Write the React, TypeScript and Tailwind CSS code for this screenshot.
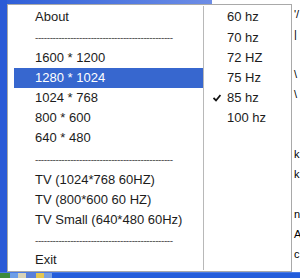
import React from 'react';

const font = { fontFamily: '"Liberation Sans", Arial, sans-serif' };

type Item = { label: string; kind?: 'sep'; active?: boolean; h?: string };

const leftItems: Item[] = [
  { label: 'About' },
  { label: '', kind: 'sep', h: 'h-[21px]' },
  { label: '1600 * 1200' },
  { label: '1280 * 1024', active: true },
  { label: '1024 * 768' },
  { label: '800 * 600' },
  { label: '640 * 480' },
  { label: '', kind: 'sep', h: 'h-[22px]' },
  { label: 'TV (1024*768 60HZ)' },
  { label: 'TV (800*600 60 HZ)' },
  { label: 'TV Small (640*480 60Hz)' },
  { label: '', kind: 'sep' },
  { label: 'Exit' },
];

const rates = [
  { label: '60 hz' },
  { label: '70 hz', h: 'h-[21px]' },
  { label: '72 HZ' },
  { label: '75 Hz' },
  { label: '85 hz', checked: true },
  { label: '100 hz' },
];

// bits of the window behind the menu, one per 20px line
const behind = ["'/", '|', '', '\\', '\\', '', '', 'k', 'k', '', 'n', 'A', 'c'];

function Check() {
  return (
    <svg width="8" height="8" viewBox="0 0 8 8" className="shrink-0">
      <path d="M0.5 4 L3 6.5 L7.5 1" fill="none" stroke="#111" strokeWidth="1.8" />
    </svg>
  );
}

export default function App() {
  return (
    <div className="relative w-[300px] h-[278px] overflow-hidden bg-white" style={font}>
      {/* desktop behind the menu */}
      <div className="flex flex-col w-full h-full">
        <div className="flex flex-1">
          <div className="w-[7px] bg-[#2a5ad6]" />
          <div className="flex-1 flex flex-col">
            <div className="h-[4px] w-[205px] bg-gradient-to-r from-[#2f5fd8] to-[#6d8de6]" />
            <div className="flex-1 flex justify-end">
              <div className="w-[7px] flex flex-col text-[11px] text-black leading-[20px]">
                {behind.map((c, i) => (
                  <div key={i} className="h-[20px] pl-[1px] whitespace-nowrap">{c}</div>
                ))}
              </div>
            </div>
          </div>
        </div>
        <div className="h-[6px] flex bg-[#245ddb] border-t border-[#4a7ae6]">
          <div className="w-[10px] bg-[#3c8a3c]" />
          <div className="w-[8px] bg-[#6e9ee6]" />
          <div className="w-[8px] bg-[#d8d2b8]" />
          <div className="w-[10px] bg-[#5a7fd8]" />
          <div className="w-[8px] bg-[#e4c650]" />
          <div className="w-[8px] bg-[#7aa0e0]" />
        </div>
      </div>

      {/* popup menu */}
      <div className="absolute left-[7px] top-[4px] w-[285px] h-[268px] bg-white border border-[#a9a9a9] flex text-[13px] text-[#1c1c1c]">
        <div className="w-[195px] pl-[6px] pt-[2px] flex flex-col">
          {leftItems.map((it, i) =>
            it.kind === 'sep' ? (
              <div key={i} className={`${it.h ?? 'h-[20px]'} pl-[21px] flex items-center`}>
                <span className="whitespace-nowrap text-[#555] text-[10px] tracking-[-0.4px]">
                  {'-'.repeat(47)}
                </span>
              </div>
            ) : (
              <div
                key={i}
                className={`h-[20px] pl-[21px] flex items-center whitespace-nowrap ${
                  it.active ? 'bg-[#3767cf] text-white' : ''
                }`}
              >
                {it.label}
              </div>
            )
          )}
        </div>
        <div className="w-px mt-[1px] mb-[1px] bg-[#b8b8b8]" />
        <div className="flex-1 pt-[2px] flex flex-col">
          {rates.map((r, i) => (
            <div key={i} className={`${r.h ?? 'h-[20px]'} flex items-center`}>
              <div className="w-[23px] flex justify-center pl-[3px]">{r.checked && <Check />}</div>
              <span className="whitespace-nowrap">{r.label}</span>
            </div>
          ))}
        </div>
      </div>
    </div>
  );
}
